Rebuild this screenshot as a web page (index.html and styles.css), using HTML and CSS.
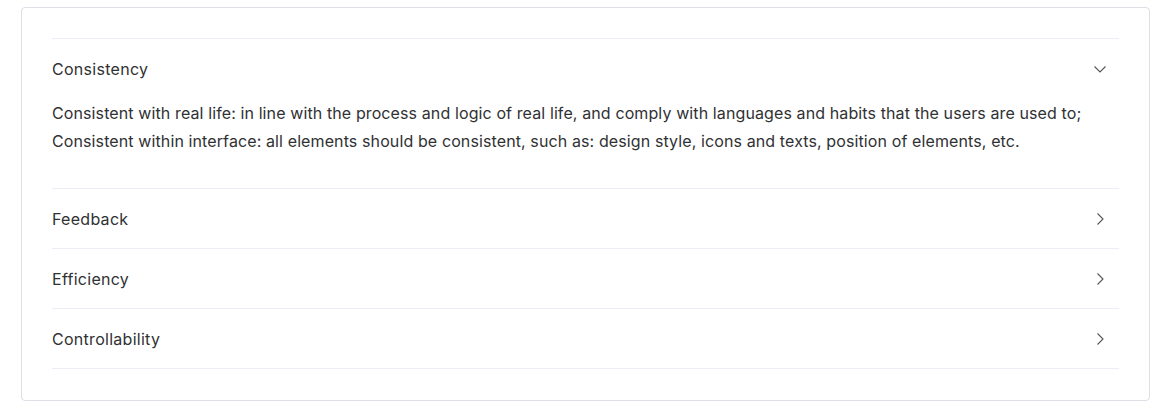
FILE: index.html
```html
<!DOCTYPE html>
<html>
<head>
<meta charset="utf-8">
<link rel="stylesheet" href="styles.css">
</head>
<body>
<div class="card">
  <div class="collapse">
    <div class="item active">
      <div class="header">
        <span class="title">Consistency</span>
        <svg class="arrow" viewBox="0 0 16 16" width="16" height="16"><path d="M2.5 5.5 L8 11 L13.5 5.5" fill="none" stroke="currentColor" stroke-width="1.1"/></svg>
      </div>
      <div class="content">
        <div>Consistent with real life: in line with the process and logic of real life, and comply with languages and habits that the users are used to;</div>
        <div>Consistent within interface: all elements should be consistent, such as: design style, icons and texts, position of elements, etc.</div>
      </div>
    </div>
    <div class="item">
      <div class="header">
        <span class="title">Feedback</span>
        <svg class="arrow" viewBox="0 0 16 16" width="16" height="16"><path d="M5.5 2.5 L11 8 L5.5 13.5" fill="none" stroke="currentColor" stroke-width="1.1"/></svg>
      </div>
    </div>
    <div class="item">
      <div class="header">
        <span class="title">Efficiency</span>
        <svg class="arrow" viewBox="0 0 16 16" width="16" height="16"><path d="M5.5 2.5 L11 8 L5.5 13.5" fill="none" stroke="currentColor" stroke-width="1.1"/></svg>
      </div>
    </div>
    <div class="item">
      <div class="header">
        <span class="title">Controllability</span>
        <svg class="arrow" viewBox="0 0 16 16" width="16" height="16"><path d="M5.5 2.5 L11 8 L5.5 13.5" fill="none" stroke="currentColor" stroke-width="1.1"/></svg>
      </div>
    </div>
  </div>
</div>
</body>
</html>
```
FILE: styles.css
```css
html, body {
  margin: 0;
  padding: 0;
  background: #ffffff;
}
body {
  padding: 7px 2px 0 21px;
  font-family: Inter, "Noto Sans", sans-serif;
  color: #303133;
}
.card {
  border: 1px solid #dcdfe6;
  border-radius: 4px;
  padding: 30px 30px 31px 30px;
  background: #fff;
}
.collapse {
  border-top: 1px solid #ebeef5;
}
.item {
  border-bottom: 1px solid #ebeef5;
}
.header {
  height: 59px;
  padding-top: 1px;
  box-sizing: border-box;
  display: flex;
  align-items: center;
  justify-content: space-between;
  font-size: 16px;
  font-weight: 400;
  letter-spacing: 0.28px;
  color: #303133;
}
.arrow {
  color: #555;
  margin-right: 11px;
}
.content {
  padding: 1px 0 33px 0;
  font-size: 16px;
  line-height: 28px;
  letter-spacing: 0.11px;
  color: #303133;
}
```
